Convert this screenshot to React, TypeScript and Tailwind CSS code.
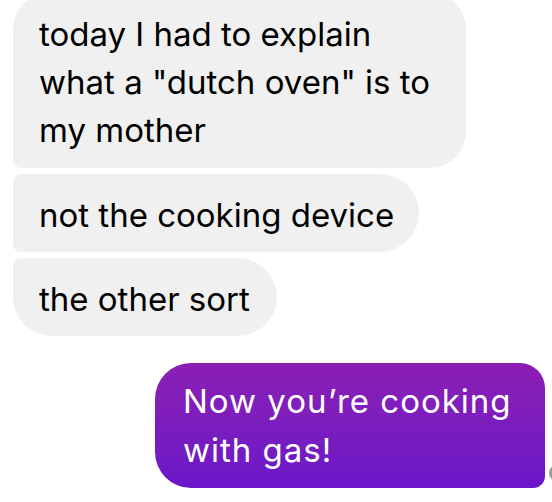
import React from "react";

const font = { fontFamily: "Inter, 'Noto Sans', Roboto, sans-serif" };

export default function App() {
  return (
    <div
      className="relative h-[502px] w-[552px] overflow-hidden bg-white text-[33px]"
      style={font}
    >
      <div className="flex flex-col gap-[6px] pl-[13px]">
        {/* Incoming group */}
        <div className="-mt-[7px] w-[453px] rounded-tl-[36px] rounded-tr-[36px] rounded-br-[36px] rounded-bl-[8px] bg-[#f0f0f0] pb-[14px] pl-[26px] pt-[17px] leading-[48px] text-black">
          today I had to explain
          <br />
          what a "dutch oven" is to
          <br />
          my mother
        </div>
        <div className="w-[406px] rounded-l-[8px] rounded-r-[39px] bg-[#f0f0f0] pb-[13px] pl-[26px] pt-[17px] leading-[48px] text-black">
          not the cooking device
        </div>
        <div className="w-[264px] rounded-tl-[8px] rounded-bl-[39px] rounded-r-[39px] bg-[#f0f0f0] pb-[13px] pl-[26px] pt-[17px] leading-[48px] text-black">
          the other sort
        </div>

        {/* Outgoing */}
        <div className="ml-[142px] mt-[21px] w-[390px] rounded-l-[36px] rounded-tr-[25px] rounded-br-[12px] bg-gradient-to-b from-[#8c1eb3] to-[#6a16ca] pb-[13px] pl-[28px] pt-[14px] leading-[49px] tracking-[1px] text-white">
          Now you’re cooking
          <br />
          with gas!
        </div>
      </div>

      {/* read receipt avatar edge */}
      <div className="absolute left-[549px] top-[465px] h-[16px] w-[16px] rounded-full bg-[#9a9a9a]" />
    </div>
  );
}
